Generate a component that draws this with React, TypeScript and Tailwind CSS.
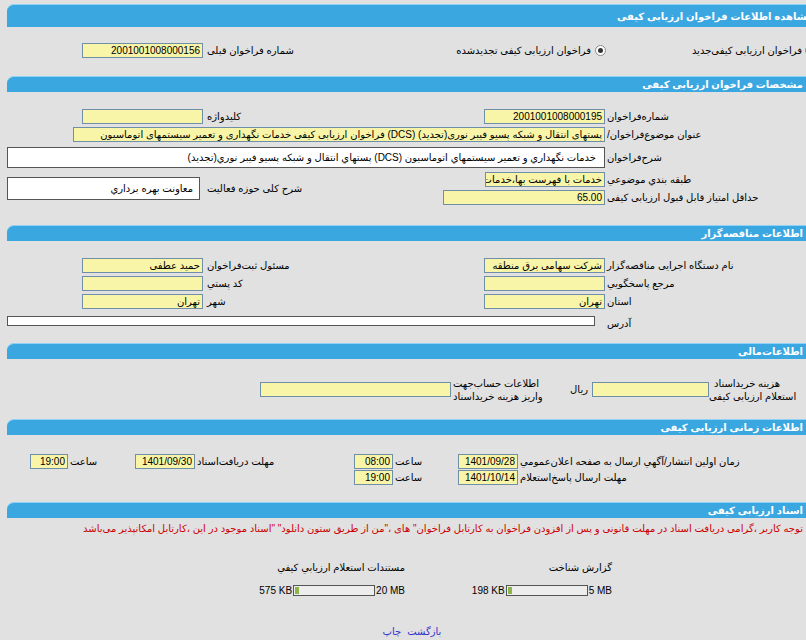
import React from 'react'

const font = "font-['Liberation_Sans','DejaVu_Sans',sans-serif]"

function Header({ title, tall, shift }: { title: string; tall?: boolean; shift?: boolean }) {
  return (
    <div
      className={`ml-[7px] flex items-center justify-end rounded-tl-[7px] border-t border-[#8fd2f5] bg-[#3ba7e1] ${
        tall ? 'h-[23px]' : 'h-[16px]'
      }`}
    >
      <span className={`whitespace-nowrap text-[10px] font-bold text-white ${shift ? 'mr-[-7px]' : 'mr-[3px]'}`}>
        {title}
      </span>
    </div>
  )
}

function Field({ value = '', w, white, h }: { value?: string; w: string; white?: boolean; h?: string }) {
  return (
    <div
      className={`${w} ${h ?? 'h-[15px]'} overflow-hidden whitespace-nowrap border px-[2px] text-right text-[10px] leading-[13px] text-black ${
        white ? 'border-[#555] bg-white' : 'border-[#6f8ea8] bg-[#f8f5a8]'
      }`}
      dir="rtl"
    >
      {value}
    </div>
  )
}

function Label({ children, className = '', rtl }: { children: React.ReactNode; className?: string; rtl?: boolean }) {
  return (
    <div className={`whitespace-nowrap text-left text-[10px] text-black ${className}`} dir={rtl ? 'rtl' : undefined}>
      {children}
    </div>
  )
}

function Radio({ checked }: { checked?: boolean }) {
  return (
    <span className="flex h-[11px] w-[11px] shrink-0 items-center justify-center rounded-full border border-[#8a8a8a] bg-white">
      {checked && <span className="h-[5px] w-[5px] rounded-full bg-[#333]" />}
    </span>
  )
}

function SizeBar({ used, max }: { used: string; max: string }) {
  return (
    <div className="flex items-center text-[10px] text-black">
      <span className="mr-[1px]">{used}</span>
      <div className="flex h-[11px] w-[82px] items-stretch border border-[#555] bg-[#ededed] p-[1px]">
        <div className="w-[4px] bg-[#8db34a]" />
      </div>
      <span className="ml-[1px]">{max}</span>
    </div>
  )
}

const row = 'grid grid-cols-[203px_199px_203px_1fr] items-center'

export default function App() {
  return (
    <div className={`h-[640px] w-[806px] overflow-hidden bg-[#e1e1e1] pt-[4px] text-[10px] ${font}`}>
      <div className="w-[806px]">
        <Header title="مشاهده اطلاعات فراخوان ارزیابی کیفی" tall shift />

        {/* نوع فراخوان */}
        <div className="mt-[14px] flex h-[18px] items-center">
          <div className="flex w-[203px] shrink-0 justify-end">
            <Field w="w-[121px]" value="2001001008000156" />
          </div>
          <Label className="w-[199px] shrink-0 pl-[4px]">شماره  فراخوان  قبلی</Label>
          <div className="flex w-[204px] shrink-0 items-center justify-end gap-[4px]">
            <span className="whitespace-nowrap">فراخوان  ارزیابی  کیفی  تجدیدشده</span>
            <Radio checked />
          </div>
          <div className="flex w-[210px] shrink-0 items-center justify-end gap-[3px]">
            <span className="whitespace-nowrap">فراخوان  ارزیابی  کیفی‌جدید</span>
            <Radio />
          </div>
        </div>

        <div className="mt-[17px]">
          <Header title="مشخصات فراخوان ارزیابی کیفی" />
        </div>

        <div className="mt-[15px]">
          <div className={`${row} h-[18px]`}>
            <div className="flex justify-end">
              <Field w="w-[121px]" />
            </div>
            <Label className="pl-[4px]">کلیدواژه</Label>
            <div className="flex justify-end">
              <Field w="w-[121px]" value="2001001008000195" />
            </div>
            <Label className="pl-[2px]">شماره‌فراخوان</Label>
          </div>
          <div className={`${row} h-[18px]`}>
            <div className="col-span-3 flex justify-end">
              <Field
                w="w-[532px]"
                value="پستهای انتقال و شبکه پسیو فیبر نوری(تجدید) (DCS) فراخوان ارزیابی کیفی خدمات نگهداری و تعمیر سیستمهای اتوماسیون"
              />
            </div>
            <Label className="pl-[2px]" rtl>
              عنوان  موضوع‌فراخوان/
            </Label>
          </div>
          <div className={`${row} mt-[4px] h-[21px]`}>
            <div className="col-span-3 flex justify-end">
              <div
                className="flex h-[21px] w-[598px] items-center justify-start overflow-hidden whitespace-nowrap border border-[#555] bg-white pr-[8px]"
                dir="rtl"
              >
                خدمات  نگهداري  و  تعمير  سيستمهاي  اتوماسيون  (DCS)  پستهاي  انتقال  و  شبکه  پسيو  فيبر  نوري(تجديد)
              </div>
            </div>
            <Label className="pl-[2px]">شرح‌فراخوان</Label>
          </div>
          <div className="mt-[2px] grid grid-cols-[203px_199px_203px_1fr] grid-rows-[18px_18px] items-center">
            <div className="row-span-2 flex justify-start pl-[7px]">
              <div
                className="flex h-[23px] w-[193px] items-center overflow-hidden whitespace-nowrap border border-[#555] bg-white pr-[6px]"
                dir="rtl"
              >
                معاونت  بهره برداري
              </div>
            </div>
            <Label className="row-span-2 pl-[4px]">شرح  کلی  حوزه فعالیت</Label>
            <div className="flex justify-end">
              <Field w="w-[120px]" value="خدمات با فهرست بها،خدمات" />
            </div>
            <Label className="pl-[2px]">طبقه  بندي  موضوعي</Label>
            <div className="col-start-3 flex justify-end">
              <Field w="w-[162px]" value="65.00" />
            </div>
            <Label className="pl-[2px]">حداقل  امتیاز  قابل  قبول  ارزیابی کیفی</Label>
          </div>
        </div>

        <div className="mt-[19px]">
          <Header title="اطلاعات مناقصه‌گزار" />
        </div>

        <div className="mt-[15px]">
          <div className={`${row} h-[18px]`}>
            <div className="flex justify-end">
              <Field w="w-[121px]" value="حمید عطفی" />
            </div>
            <Label className="pl-[4px]">مسئول  ثبت‌فراخوان</Label>
            <div className="flex justify-end">
              <Field w="w-[121px]" value="شرکت سهامی برق منطقه" />
            </div>
            <Label className="pl-[2px]">نام  دستگاه  اجرایی  مناقصه‌گزار</Label>
          </div>
          <div className={`${row} h-[18px]`}>
            <div className="flex justify-end">
              <Field w="w-[121px]" />
            </div>
            <Label className="pl-[4px]">کد پستي</Label>
            <div className="flex justify-end">
              <Field w="w-[121px]" />
            </div>
            <Label className="pl-[2px]">مرجع  پاسخگويي</Label>
          </div>
          <div className={`${row} h-[18px]`}>
            <div className="flex justify-end">
              <Field w="w-[121px]" value="تهران" />
            </div>
            <Label className="pl-[4px]">شهر</Label>
            <div className="flex justify-end">
              <Field w="w-[121px]" value="تهران" />
            </div>
            <Label className="pl-[2px]">استان</Label>
          </div>
          <div className={`${row} h-[18px]`}>
            <div className="col-span-3 pl-[7px]">
              <Field w="w-[588px]" h="h-[10px]" white />
            </div>
            <Label className="pl-[2px] pt-[6px]">آدرس</Label>
          </div>
        </div>

        <div className="mt-[15px]">
          <Header title="اطلاعات‌مالی" />
        </div>

        {/* مالی */}
        <div className="mt-[18px] flex h-[26px] items-start">
          <div className="w-[260px] shrink-0" />
          <div className="mt-[5px]">
            <Field w="w-[191px]" />
          </div>
          <div className="w-[95px] shrink-0 whitespace-nowrap pl-[2px] text-left leading-[13px]">
            <div>اطلاعات  حساب‌جهت</div>
            <div>واریز  هزینه  خریداسناد</div>
          </div>
          <div className="mt-[5px] flex h-[15px] w-[46px] shrink-0 items-center justify-end pr-[4px]">ریال</div>
          <div className="mt-[5px]">
            <Field w="w-[117px]" />
          </div>
          <div className="w-[76px] shrink-0 whitespace-nowrap text-center leading-[13px]">
            <div>هزینه  خریداسناد</div>
            <div>استعلام  ارزیابی کیفی</div>
          </div>
        </div>

        <div className="mt-[16px]">
          <Header title="اطلاعات  زمانی  ارزیابی  کیفی" />
        </div>

        {/* زمان */}
        <div className="mt-[18px] grid grid-cols-[30px_38px_67px_60px_159px_39px_65px_60px_1fr] grid-rows-[16px_16px] items-center">
          <div />
          <Field w="w-[38px]" value="19:00" />
          <Label className="pl-[2px]">ساعت</Label>
          <Field w="w-[60px]" value="1401/09/30" />
          <Label className="pl-[2px]">مهلت  دریافت‌اسناد</Label>
          <Field w="w-[39px]" value="08:00" />
          <Label className="pl-[2px]">ساعت</Label>
          <Field w="w-[60px]" value="1401/09/28" />
          <Label className="pl-[2px]">زمان  اولین  انتشار/آگهي  ارسال  به  صفحه  اعلان‌عمومي</Label>

          <div className="col-start-6">
            <Field w="w-[39px]" value="19:00" />
          </div>
          <Label className="pl-[2px]">ساعت</Label>
          <Field w="w-[60px]" value="1401/10/14" />
          <Label className="pl-[2px]">مهلت  ارسال  پاسخ‌استعلام</Label>
        </div>

        <div className="mt-[17px]">
          <Header title="اسناد ارزیابی کیفی" />
        </div>

        <div className="mt-[2px] flex h-[16px] items-center justify-end pr-[3px]">
          <div className="whitespace-nowrap text-[#cc0000]" dir="rtl">
            توجه کاربر ،گرامی دریافت اسناد در مهلت قانونی و پس از افزودن فراخوان به کارتابل فراخوان" های ،"من از طریق ستون دانلود" "اسناد موجود در این ،کارتابل امکانپذیر می‌باشد
          </div>
        </div>

        {/* فایل‌ها */}
        <div className="mt-[23px] grid grid-cols-[213px_192px_15px_192px]">
          <div className="col-start-2 flex h-[16px] items-center justify-end whitespace-nowrap">
            مستندات  استعلام  ارزیابي کیفي
          </div>
          <div className="col-start-4 flex h-[16px] items-center justify-end whitespace-nowrap">گزارش شناخت</div>
          <div className="col-start-2 mt-[7px] flex h-[16px] items-center justify-end">
            <SizeBar used="575 KB" max="20 MB" />
          </div>
          <div className="col-start-4 mt-[7px] flex h-[16px] items-center justify-end">
            <SizeBar used="198 KB" max="5 MB" />
          </div>
        </div>

        <div className="mt-[25px] flex h-[16px] items-center justify-center pl-[18px]">
          <div className="flex gap-[6px] text-[#3333cc]" dir="rtl">
            <a href="#" className="cursor-pointer">بازگشت</a>
            <a href="#" className="cursor-pointer">چاپ</a>
          </div>
        </div>
      </div>
    </div>
  )
}
